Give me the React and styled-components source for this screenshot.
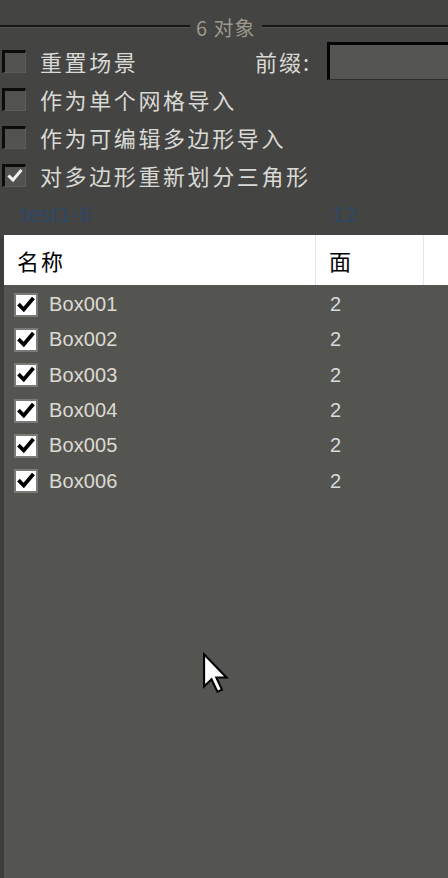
import React from "react";
import styled, { createGlobalStyle } from "styled-components";

const Global = createGlobalStyle`
  html, body { margin: 0; padding: 0; background: #444442; }
  body { overflow: hidden; }
  * { box-sizing: border-box; }
`;

const CJK = `"Noto Sans CJK SC", "Noto Sans", sans-serif`;
const LATIN = `"Liberation Sans", "Noto Sans CJK SC", sans-serif`;

const Page = styled.div`
  position: relative;
  width: 448px;
  height: 878px;
  display: flex;
  flex-direction: column;
  background: #444442;
  overflow: hidden;
`;

const GroupHeader = styled.div`
  height: 42px;
  padding-top: 10px;
  display: flex;
  align-items: center;
  gap: 6px;
`;

const GroupLine = styled.div`
  flex: ${(p) => (p.$fixed ? `0 0 ${p.$fixed}px` : "1")};
  height: 2px;
  background: #161616;
  box-shadow: 0 1px 0 #555553;
`;

const GroupTitle = styled.span`
  font-family: ${CJK};
  font-size: 20px;
  letter-spacing: 1px;
  line-height: 1;
  color: #9d988b;
  white-space: nowrap;
  margin-top: 3px;
`;

const OptionRow = styled.div`
  height: 38px;
  display: flex;
  align-items: center;
  padding-left: 2px;
`;

const Box = styled.span`
  flex: 0 0 auto;
  width: 24px;
  height: 23px;
  border-style: solid;
  border-width: 3px 1px 1px 3px;
  border-color: #0c0c0c #5c5c5a #5c5c5a #0c0c0c;
  background: #52524f;
  display: flex;
  align-items: center;
  justify-content: center;
`;

const Label = styled.span`
  margin-left: 14px;
  font-family: ${CJK};
  font-size: 22px;
  letter-spacing: 2.6px;
  color: #d9d9d6;
  white-space: nowrap;
  line-height: 1;
`;

const PrefixLabel = styled(Label)`
  margin-left: auto;
  margin-right: 16px;
  letter-spacing: 2px;
`;

const PrefixInput = styled.div`
  width: 124px;
  margin-right: -3px;
  height: 38px;
  border-style: solid;
  border-width: 3px 0 1px 3px;
  border-color: #050505 #5c5c5a #2e2e2c #050505;
  background: #555553;
`;

const Summary = styled.div`
  height: 42px;
  display: grid;
  grid-template-columns: 311px 1fr;
  align-items: center;
  padding-left: 21px;
  font-family: ${LATIN};
  font-size: 22px;
  letter-spacing: 0.5px;
  color: #2d4767;
`;

const List = styled.div`
  flex: 1;
  display: flex;
  flex-direction: column;
  border-left: 4px solid #3d3e3b;
  background: #545551;
`;

const Header = styled.div`
  height: 50px;
  display: grid;
  grid-template-columns: 312px 108px 1fr;
  background: #ffffff;
  margin-top: -1px;
`;

const HeaderCell = styled.div`
  display: flex;
  align-items: center;
  padding-left: ${(p) => p.$pad}px;
  border-right: ${(p) => (p.$last ? "none" : "1px solid #e4e4f0")};
  font-family: ${CJK};
  font-size: 22px;
  letter-spacing: 2px;
  color: #000;
`;

const Rows = styled.div`
  padding-top: 2px;
  display: flex;
  flex-direction: column;
`;

const ItemRow = styled.div`
  height: 35.3px;
  display: grid;
  grid-template-columns: 316px 1fr;
  align-items: center;
  padding-left: 10px;
`;

const NameCell = styled.div`
  display: flex;
  align-items: center;
`;

const WhiteBox = styled.span`
  width: 24px;
  height: 24px;
  border: 2px solid #7a7a78;
  background: #ffffff;
  display: flex;
  align-items: center;
  justify-content: center;
`;

const ItemName = styled.span`
  margin-left: 11px;
  font-family: ${LATIN};
  font-size: 20px;
  letter-spacing: 0.1px;
  color: #dedad2;
`;

const ItemValue = styled.span`
  font-family: ${LATIN};
  font-size: 20px;
  color: #d9dade;
`;

const Cursor = styled.svg`
  position: absolute;
  left: 202px;
  top: 652px;
`;

const Tick = ({ color, size = 16, weight = 3 }) => (
  <svg width={size} height={size} viewBox="0 0 16 16">
    <path
      d="M2.5 8.5 L6 12 L13.5 3"
      fill="none"
      stroke={color}
      strokeWidth={weight}
      strokeLinecap="square"
    />
  </svg>
);

const options = [
  { label: "重置场景", checked: false, prefix: true },
  { label: "作为单个网格导入", checked: false },
  { label: "作为可编辑多边形导入", checked: false },
  { label: "对多边形重新划分三角形", checked: true },
];

const items = ["Box001", "Box002", "Box003", "Box004", "Box005", "Box006"].map(
  (name) => ({ name, faces: 2 })
);

export default function App() {
  return (
    <Page>
      <Global />
      <GroupHeader>
        <GroupLine $fixed={190} />
        <GroupTitle>6 对象</GroupTitle>
        <GroupLine />
      </GroupHeader>
      {options.map((o) => (
        <OptionRow key={o.label}>
          <Box>{o.checked && <Tick color="#f2f2f2" size={16} weight={3} />}</Box>
          <Label>{o.label}</Label>
          {o.prefix && (
            <>
              <PrefixLabel>前缀:</PrefixLabel>
              <PrefixInput />
            </>
          )}
        </OptionRow>
      ))}
      <Summary>
        <span>test1-6</span>
        <span>12</span>
      </Summary>
      <List>
        <Header>
          <HeaderCell $pad={13}>名称</HeaderCell>
          <HeaderCell $pad={13}>面</HeaderCell>
          <HeaderCell $last />
        </Header>
        <Rows>
          {items.map((it) => (
            <ItemRow key={it.name}>
              <NameCell>
                <WhiteBox>
                  <Tick color="#000" size={18} weight={3.4} />
                </WhiteBox>
                <ItemName>{it.name}</ItemName>
              </NameCell>
              <ItemValue>{it.faces}</ItemValue>
            </ItemRow>
          ))}
        </Rows>
      </List>
      <Cursor width="27" height="42" viewBox="0 0 13 20">
        <path
          d="M1 1 L1 16.5 L4.6 13 L7.4 19 L9.6 18 L6.9 12.2 L11.8 12.2 Z"
          fill="#ffffff"
          stroke="#000000"
          strokeWidth="1"
          strokeLinejoin="miter"
        />
      </Cursor>
    </Page>
  );
}
